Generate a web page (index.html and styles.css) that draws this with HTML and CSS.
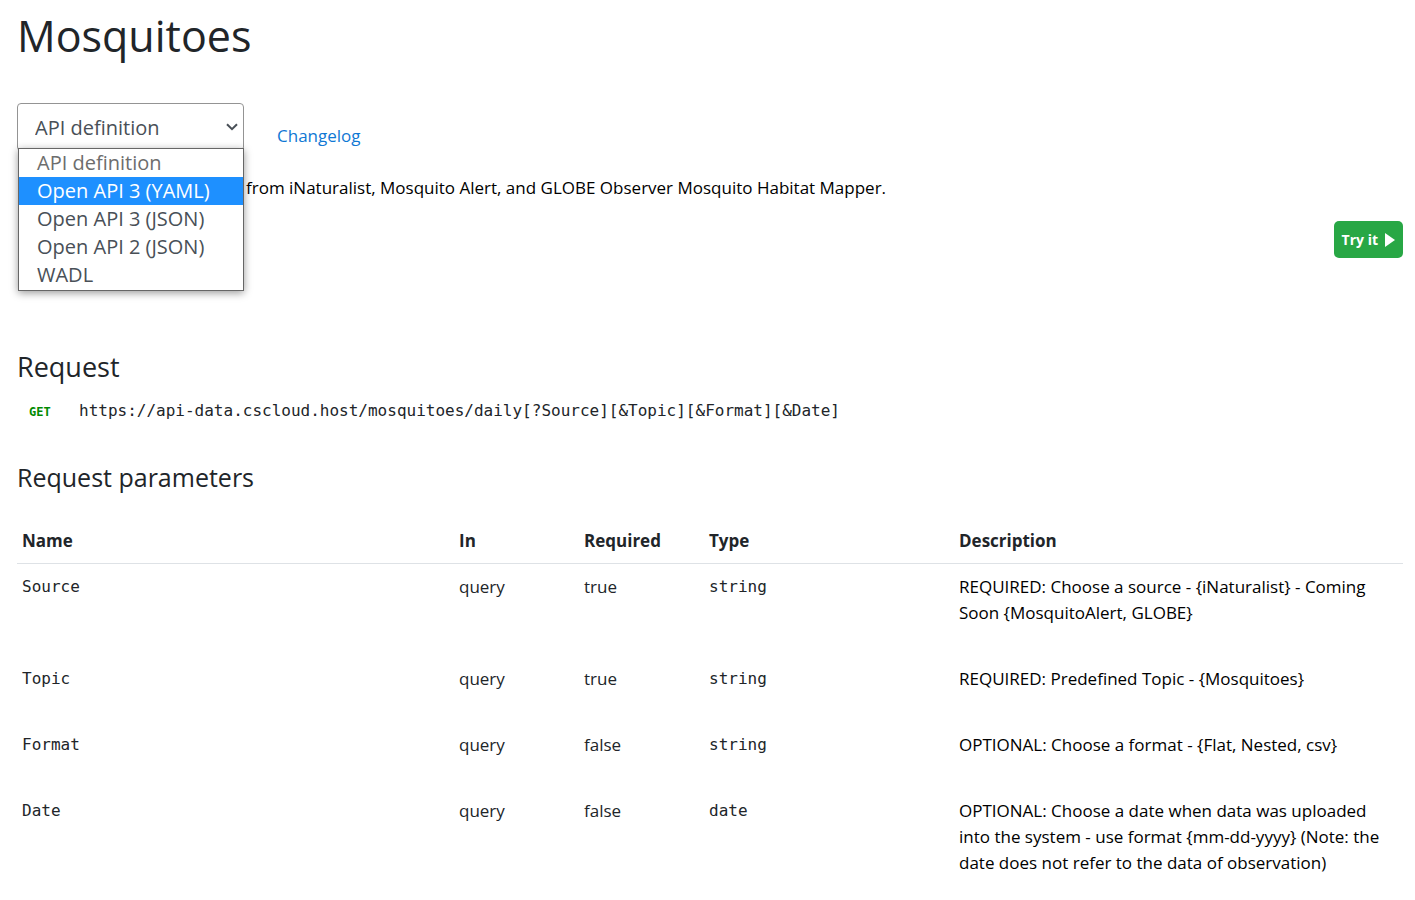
FILE: index.html
```html
<!DOCTYPE html>
<html lang="en">
<head>
<meta charset="utf-8">
<meta name="viewport" content="width=device-width, initial-scale=1">
<title>Mosquitoes</title>
<link rel="stylesheet" href="styles.css">
</head>
<body>
<main class="page">
  <h1 class="title">Mosquitoes</h1>
  <div class="toolbar">
    <div class="picker">
      <select class="picker-select" aria-label="API definition">
        <option>API definition</option>
        <option>Open API 3 (YAML)</option>
        <option>Open API 3 (JSON)</option>
        <option>Open API 2 (JSON)</option>
        <option>WADL</option>
      </select>
      <svg class="picker-arrow" viewBox="0 0 12 8" aria-hidden="true"><path d="M1 1.2 6 6.2 11 1.2" fill="none" stroke="#495057" stroke-width="2"/></svg>
      <ul class="menu" role="listbox" aria-label="API definition">
        <li class="menu-item menu-item-muted" role="option">API definition</li>
        <li class="menu-item menu-item-active" role="option" aria-selected="true">Open API 3 (YAML)</li>
        <li class="menu-item" role="option">Open API 3 (JSON)</li>
        <li class="menu-item" role="option">Open API 2 (JSON)</li>
        <li class="menu-item" role="option">WADL</li>
      </ul>
    </div>
    <a class="changelog" href="#">Changelog</a>
  </div>
  <p class="summary">from iNaturalist, Mosquito Alert, and GLOBE Observer Mosquito Habitat Mapper.</p>
  <div class="actions">
    <button class="try" type="button">Try it <svg class="try-icon" viewBox="0 0 10 14" aria-hidden="true"><path d="M0 0 10 7 0 14Z" fill="#fff"/></svg></button>
  </div>
  <h2 class="heading">Request</h2>
  <div class="request"><span class="method">GET</span><span class="url">https://api-data.cscloud.host/mosquitoes/daily[?Source][&amp;Topic][&amp;Format][&amp;Date]</span></div>
  <h3 class="subheading">Request parameters</h3>
  <table class="params">
    <colgroup><col class="col-name"><col class="col-in"><col class="col-required"><col class="col-type"><col></colgroup>
    <thead><tr><th>Name</th><th>In</th><th>Required</th><th>Type</th><th>Description</th></tr></thead>
    <tbody>
      <tr><td class="code">Source</td><td>query</td><td>true</td><td class="code">string</td><td class="desc">REQUIRED: Choose a source - {iNaturalist} - Coming Soon {MosquitoAlert, GLOBE}</td></tr>
      <tr><td class="code">Topic</td><td>query</td><td>true</td><td class="code">string</td><td class="desc">REQUIRED: Predefined Topic - {Mosquitoes}</td></tr>
      <tr><td class="code">Format</td><td>query</td><td>false</td><td class="code">string</td><td class="desc">OPTIONAL: Choose a format - {Flat, Nested, csv}</td></tr>
      <tr><td class="code">Date</td><td>query</td><td>false</td><td class="code">date</td><td class="desc">OPTIONAL: Choose a date when data was uploaded into the system - use format {mm-dd-yyyy} (Note: the date does not refer to the data of observation)</td></tr>
    </tbody>
  </table>
</main>
</body>
</html>
```
FILE: styles.css
```css
* { box-sizing: border-box; }
body {
  margin: 0;
  background: #fff;
  color: #212529;
  font-family: "Open Sans", sans-serif;
  font-size: 17px;
  line-height: 26px;
}
.page { padding: 6px 12px 10px 17px; }
.title, .heading, .subheading { margin: 0; font-weight: 400; }
.title { font-size: 43px; line-height: 60px; }
.toolbar { display: flex; align-items: center; gap: 33px; margin-top: 37px; }
.picker { position: relative; width: 227px; }
.picker-select {
  display: block;
  width: 100%;
  height: 48px;
  padding: 0 17px;
  border: 1px solid #949494;
  border-radius: 4px;
  background: #fff;
  color: #495057;
  font: 20px "Open Sans", sans-serif;
  appearance: none;
}
.picker-arrow { position: absolute; right: 6px; top: 20px; width: 12px; height: 8px; }
.menu {
  position: absolute;
  top: 45px;
  left: 1px;
  right: 0;
  margin: 0;
  padding: 0 0 1px;
  border: 1px solid #666;
  background: #fff;
  box-shadow: 0 2px 8px rgba(0, 0, 0, 0.4);
  color: #495057;
  font-size: 20px;
  line-height: 28px;
  list-style: none;
}
.menu-item { padding: 0 18px; white-space: nowrap; }
.menu-item-muted { color: #6d6d6d; }
.menu-item-active { background: #1e90ff; color: #fff; }
.changelog { margin-top: 18px; color: #0f78d4; text-decoration: none; }
.summary { margin: 24px 0 0; padding-left: 229px; color: #000; }
.actions { display: flex; justify-content: flex-end; margin-top: 20px; }
.try {
  display: flex;
  align-items: center;
  gap: 7px;
  height: 37px;
  padding: 0 8px;
  border: 0;
  border-radius: 5px;
  background: #28a745;
  color: #fff;
  font: 700 14px "Open Sans", sans-serif;
}
.try-icon { width: 10px; height: 14px; }
.heading { margin-top: 90px; font-size: 27px; line-height: 38px; }
.request {
  display: flex;
  align-items: baseline;
  margin-top: 12px;
  padding-left: 12px;
  font-family: "DejaVu Sans Mono", monospace;
  font-size: 16px;
}
.method { width: 50px; color: #008a00; font-size: 12px; font-weight: 700; }
.subheading { margin-top: 34px; font-size: 25px; line-height: 36px; }
.params { width: 100%; margin-top: 23px; border-collapse: collapse; table-layout: fixed; }
.col-name { width: 437px; }
.col-in, .col-required { width: 125px; }
.col-type { width: 250px; }
.params th { padding: 10px 5px 9px; border-bottom: 1px solid #dee2e6; font-weight: 700; text-align: left; }
.params td { padding: 10px 5px 30px; vertical-align: top; }
.params .code { font-family: "DejaVu Sans Mono", monospace; font-size: 16px; }
.params .desc { color: #000; }
```
